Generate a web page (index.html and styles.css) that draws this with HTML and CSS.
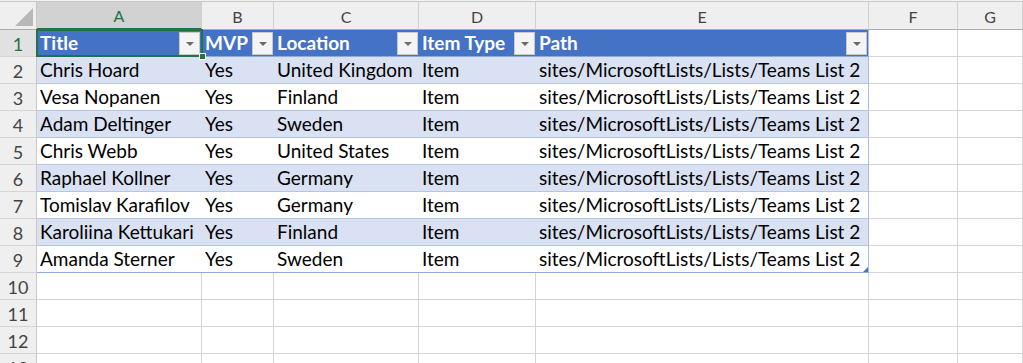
FILE: index.html
```html
<!DOCTYPE html>
<html lang="en">
<head>
<meta charset="utf-8">
<title>Sheet</title>
<link rel="stylesheet" href="styles.css">
</head>
<body>
<div class="sheet">
  <div class="row colhead">
    <div class="corner"><span class="tri"></span></div>
    <div class="ch sel">A</div>
    <div class="ch">B</div>
    <div class="ch">C</div>
    <div class="ch">D</div>
    <div class="ch">E</div>
    <div class="ch">F</div>
    <div class="ch">G</div>
  </div>

  <div class="row thead">
    <div class="rh sel">1</div>
    <div class="c th active"><span>Title</span><span class="flt"></span></div>
    <div class="c th"><span>MVP</span><span class="flt"></span></div>
    <div class="c th"><span>Location</span><span class="flt"></span></div>
    <div class="c th"><span>Item Type</span><span class="flt"></span></div>
    <div class="c th last"><span>Path</span><span class="flt"></span></div>
    <div class="c"></div>
    <div class="c"></div>
  </div>

  <div class="row band">
    <div class="rh">2</div>
    <div class="c td">Chris Hoard</div>
    <div class="c td">Yes</div>
    <div class="c td">United Kingdom</div>
    <div class="c td">Item</div>
    <div class="c td last">sites/MicrosoftLists/Lists/Teams List 2</div>
    <div class="c"></div>
    <div class="c"></div>
  </div>

  <div class="row plain">
    <div class="rh">3</div>
    <div class="c td">Vesa Nopanen</div>
    <div class="c td">Yes</div>
    <div class="c td">Finland</div>
    <div class="c td">Item</div>
    <div class="c td last">sites/MicrosoftLists/Lists/Teams List 2</div>
    <div class="c"></div>
    <div class="c"></div>
  </div>

  <div class="row band">
    <div class="rh">4</div>
    <div class="c td">Adam Deltinger</div>
    <div class="c td">Yes</div>
    <div class="c td">Sweden</div>
    <div class="c td">Item</div>
    <div class="c td last">sites/MicrosoftLists/Lists/Teams List 2</div>
    <div class="c"></div>
    <div class="c"></div>
  </div>

  <div class="row plain">
    <div class="rh">5</div>
    <div class="c td">Chris Webb</div>
    <div class="c td">Yes</div>
    <div class="c td">United States</div>
    <div class="c td">Item</div>
    <div class="c td last">sites/MicrosoftLists/Lists/Teams List 2</div>
    <div class="c"></div>
    <div class="c"></div>
  </div>

  <div class="row band">
    <div class="rh">6</div>
    <div class="c td">Raphael Kollner</div>
    <div class="c td">Yes</div>
    <div class="c td">Germany</div>
    <div class="c td">Item</div>
    <div class="c td last">sites/MicrosoftLists/Lists/Teams List 2</div>
    <div class="c"></div>
    <div class="c"></div>
  </div>

  <div class="row plain">
    <div class="rh">7</div>
    <div class="c td">Tomislav Karafilov</div>
    <div class="c td">Yes</div>
    <div class="c td">Germany</div>
    <div class="c td">Item</div>
    <div class="c td last">sites/MicrosoftLists/Lists/Teams List 2</div>
    <div class="c"></div>
    <div class="c"></div>
  </div>

  <div class="row band">
    <div class="rh">8</div>
    <div class="c td">Karoliina Kettukari</div>
    <div class="c td">Yes</div>
    <div class="c td">Finland</div>
    <div class="c td">Item</div>
    <div class="c td last">sites/MicrosoftLists/Lists/Teams List 2</div>
    <div class="c"></div>
    <div class="c"></div>
  </div>

  <div class="row plain">
    <div class="rh">9</div>
    <div class="c td">Amanda Sterner</div>
    <div class="c td">Yes</div>
    <div class="c td">Sweden</div>
    <div class="c td">Item</div>
    <div class="c td last corner-handle">sites/MicrosoftLists/Lists/Teams List 2</div>
    <div class="c"></div>
    <div class="c"></div>
  </div>

  <div class="row">
    <div class="rh">10</div>
    <div class="c"></div><div class="c"></div><div class="c"></div><div class="c"></div><div class="c"></div><div class="c"></div><div class="c"></div>
  </div>
  <div class="row">
    <div class="rh">11</div>
    <div class="c"></div><div class="c"></div><div class="c"></div><div class="c"></div><div class="c"></div><div class="c"></div><div class="c"></div>
  </div>
  <div class="row">
    <div class="rh">12</div>
    <div class="c"></div><div class="c"></div><div class="c"></div><div class="c"></div><div class="c"></div><div class="c"></div><div class="c"></div>
  </div>
  <div class="row">
    <div class="rh">13</div>
    <div class="c"></div><div class="c"></div><div class="c"></div><div class="c"></div><div class="c"></div><div class="c"></div><div class="c"></div>
  </div>
</div>
</body>
</html>
```

FILE: styles.css
```css
html, body {
  margin: 0;
  padding: 0;
  background: #ffffff;
  overflow: hidden;
}

body {
  width: 1023px;
  height: 363px;
  font-family: Lato, "Liberation Sans", sans-serif;
  font-size: 19px;
  color: #000000;
}

.sheet {
  display: flex;
  flex-direction: column;
  padding-top: 1px;
  background: #f3f3f3;
}

.row {
  display: grid;
  grid-template-columns: 37px 165px 72px 145px 117px 333px 89px 65px;
  height: 27px;
  background: #ffffff;
}

.row > div {
  box-sizing: border-box;
  min-width: 0;
}

/* column headers */
.colhead {
  height: 28px;
  border-top: 1px solid #c8c8c8;
  background: #efefef;
}

.corner {
  position: relative;
  border-right: 1px solid #c8c8c8;
  border-bottom: 1px solid #ababab;
  background: #efefef;
}

.corner .tri {
  position: absolute;
  right: 3px;
  bottom: 3px;
  width: 18px;
  height: 18px;
  background: #b8b8b8;
  clip-path: polygon(100% 0, 100% 100%, 0 100%);
}

.ch {
  display: flex;
  justify-content: center;
  align-items: center;
  padding-top: 1px;
  font-size: 16px;
  color: #444444;
  background: #efefef;
  border-right: 1px solid #d0d0d0;
  border-bottom: 1px solid #ababab;
}

.ch.sel {
  background: #d2d2d2;
  color: #217346;
  border-bottom: 2px solid #217346;
}

/* row headers */
.rh {
  display: flex;
  justify-content: center;
  align-items: center;
  padding-top: 1px;
  font-size: 18px;
  color: #444444;
  background: #efefef;
  border-right: 1px solid #c8c8c8;
  border-bottom: 1px solid #d4d4d4;
}

.rh.sel {
  background: #e1e1e1;
  color: #217346;
}

/* cells */
.c {
  border-right: 1px solid #d4d4d4;
  border-bottom: 1px solid #d4d4d4;
  line-height: 26px;
  padding-left: 3px;
  white-space: nowrap;
  overflow: visible;
}

.th {
  display: flex;
  justify-content: space-between;
  align-items: center;
  background: #4472c4;
  color: #ffffff;
  font-weight: 700;
  border-right: none;
  border-bottom: 1px solid #8ea9db;
  padding-right: 1px;
}

.th.last {
  border-right: 1px solid #a9bde3;
}

.th.active {
  position: relative;
  padding-right: 2px;
}

.th.active::after {
  content: "";
  position: absolute;
  left: -1px;
  top: -1px;
  right: -1px;
  bottom: -1px;
  border: 2px solid #217346;
}

.th.active::before {
  content: "";
  position: absolute;
  right: -4px;
  bottom: -4px;
  width: 5px;
  height: 5px;
  background: #217346;
  border: 1px solid #ffffff;
  z-index: 2;
}

.flt {
  position: relative;
  width: 21px;
  height: 23px;
  box-sizing: border-box;
  background: #f4f4f4;
  border: 1px solid #c9c9c9;
  flex: none;
}

.flt::after {
  content: "";
  position: absolute;
  left: 6px;
  top: 9px;
  border-left: 4px solid transparent;
  border-right: 4px solid transparent;
  border-top: 4px solid #6a6a6a;
}

.td {
  border-right: none;
  border-bottom: 1px solid #b4c6e7;
}

.band .td {
  background: #d9e1f2;
}

.plain .td {
  background: #ffffff;
}

.td.last {
  border-right: 1px solid #a9bde3;
}

.row:nth-child(10) .td {
  border-bottom-color: #8ea9db;
}

.corner-handle {
  position: relative;
}

.corner-handle::after {
  content: "";
  position: absolute;
  right: 0;
  bottom: 0;
  width: 5px;
  height: 5px;
  background: #4472c4;
  clip-path: polygon(100% 0, 100% 100%, 0 100%);
}
```
